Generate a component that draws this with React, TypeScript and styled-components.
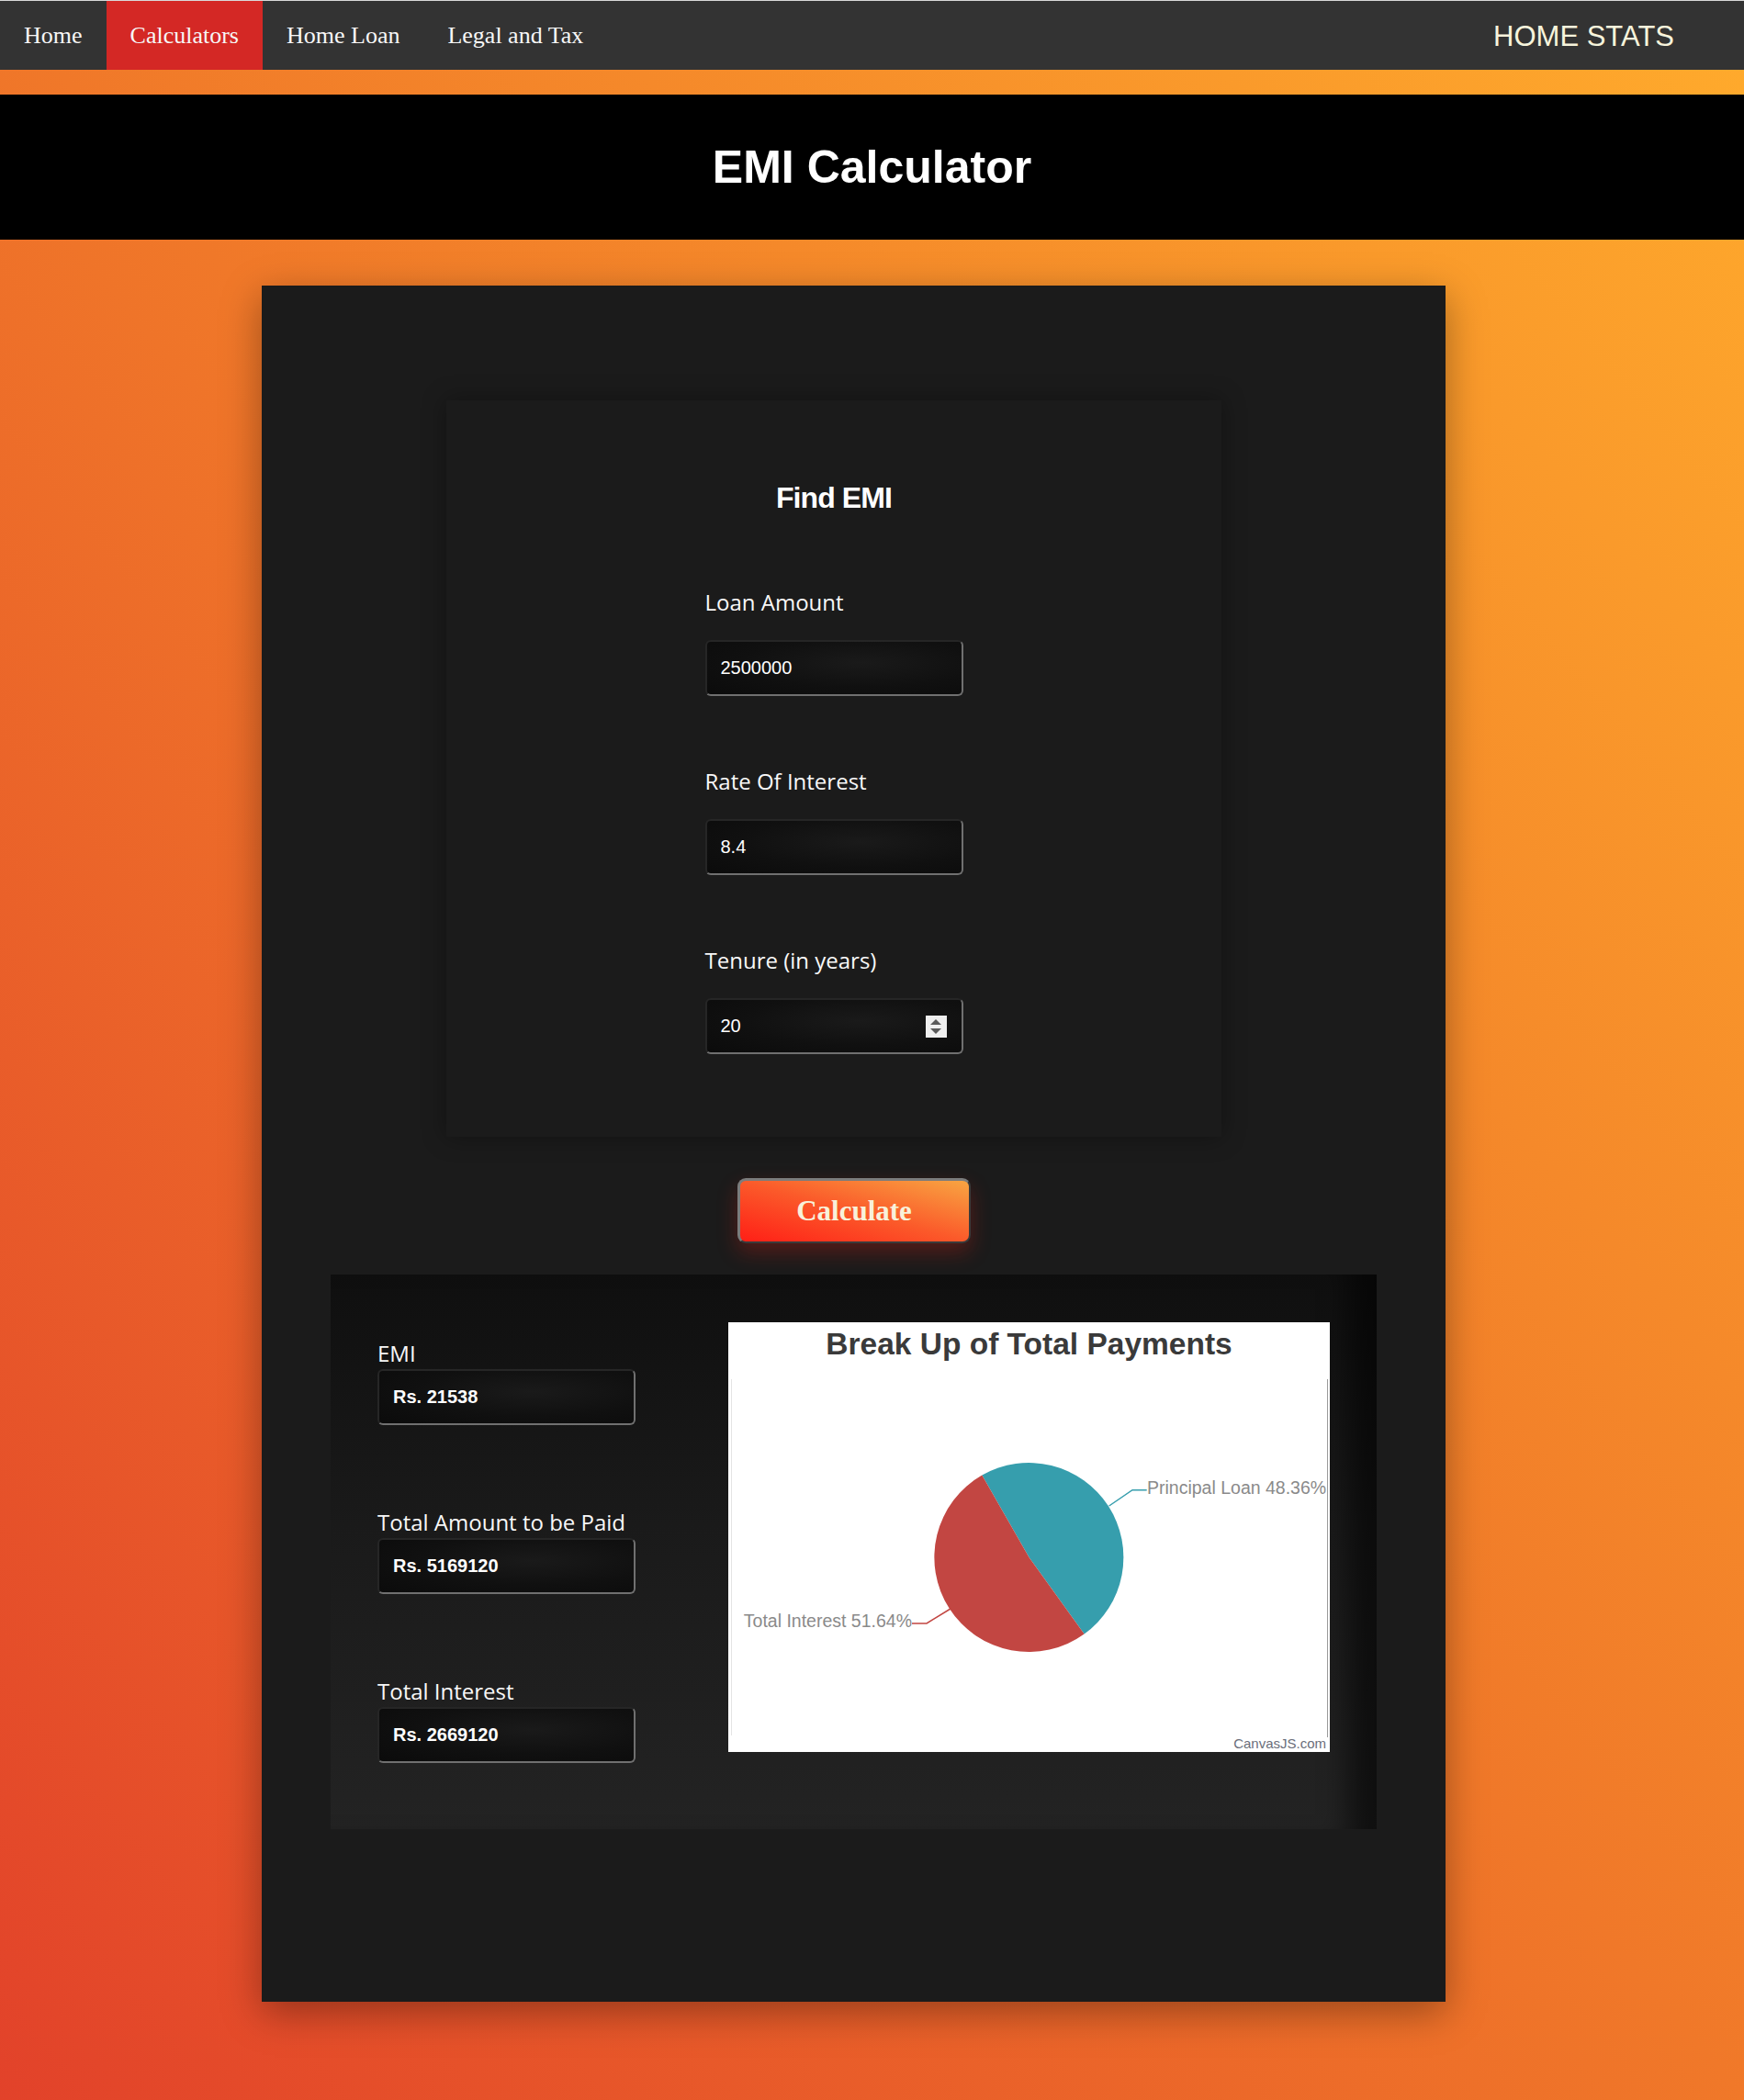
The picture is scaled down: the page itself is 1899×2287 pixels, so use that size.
import React from "react";
import styled, { createGlobalStyle } from "styled-components";

const GlobalStyle = createGlobalStyle`
  html, body { margin: 0; padding: 0; }
  body { font-family: "Liberation Sans", Arial, sans-serif; }
  * { box-sizing: border-box; }
`;

const Page = styled.div`
  min-height: 2287px;
  display: flow-root;
  background: linear-gradient(to top right, #e2422a 0%, #f07829 50%, #ffab2c 100%);
`;

const NavBar = styled.nav`
  height: 76px;
  border-top: 1px solid #d9d9d9;
  background: #333333;
  display: flex;
  justify-content: space-between;
  align-items: stretch;
`;

const NavList = styled.ul`
  display: flex;
  margin: 0;
  padding: 0;
  list-style: none;
`;

const NavItem = styled.li<{ $active?: boolean }>`
  display: flex;
  align-items: center;
  padding: 0 26px;
  font-family: "Liberation Serif", "Times New Roman", serif;
  font-size: 26px;
  color: #f7f7f7;
  background: ${(p) => (p.$active ? "#d42825" : "transparent")};
`;

const Brand = styled.div`
  display: flex;
  align-items: center;
  padding-top: 3px;
  margin-right: 76px;
  font-family: "Liberation Sans", Arial, sans-serif;
  font-size: 31px;
  color: #f7f4dc;
`;

const Header = styled.header`
  margin-top: 27px;
  height: 158px;
  background: #000;
  display: flex;
  align-items: center;
  justify-content: center;
`;

const Title = styled.h1`
  margin: 0;
  font-family: "Liberation Sans", Arial, sans-serif;
  font-weight: bold;
  font-size: 50px;
  color: #fff;
`;

const MainCard = styled.main`
  margin: 50px 0 107px 285px;
  width: 1289px;
  height: 1869px;
  background: #1b1b1b;
  box-shadow: 0 12px 40px rgba(0, 0, 0, 0.35);
  padding-top: 125px;
  display: flex;
  flex-direction: column;
`;

const FormCard = styled.section`
  margin-left: 201px;
  width: 844px;
  height: 802px;
  background: #1b1b1b;
  box-shadow: 0 0 24px rgba(0, 0, 0, 0.35);
  padding-top: 87px;
  display: flex;
  flex-direction: column;
  align-items: center;
`;

const CardTitle = styled.h2`
  margin: 0 0 80px;
  font-family: "Liberation Sans", Arial, sans-serif;
  font-weight: bold;
  font-size: 32px;
  line-height: 38px;
  letter-spacing: -0.9px;
  color: #fff;
`;

const FormColumn = styled.div`
  width: 281px;
  display: flex;
  flex-direction: column;
  gap: 78px;
`;

const ResultColumn = styled.div`
  padding-top: 19px;
  display: flex;
  flex-direction: column;
  gap: 91px;
`;

const Field = styled.div<{ $gap: number }>`
  display: flex;
  flex-direction: column;
  gap: ${(p) => p.$gap}px;
`;

const Label = styled.label`
  font-family: "Open Sans", Lato, sans-serif;
  font-weight: 400;
  font-size: 24px;
  line-height: 29px;
  color: #f8f8f8;
  white-space: nowrap;
`;

const FieldBox = styled.div`
  width: 281px;
  height: 61px;
  display: flex;
  align-items: center;
  padding: 0 16px 0 15px;
  border-radius: 6px;
  border-top: 2px solid #262626;
  border-left: 2px solid #262626;
  border-right: 2px solid #707070;
  border-bottom: 2px solid #707070;
  background: radial-gradient(ellipse at 60% 40%, #1a1a1a 0%, #101010 55%, #0b0b0b 100%);
`;

const FieldInput = styled.input<{ $bold?: boolean }>`
  flex: 1;
  min-width: 0;
  border: none;
  outline: none;
  background: transparent;
  padding: 0;
  font-family: "Liberation Sans", Arial, sans-serif;
  font-size: 20px;
  font-weight: ${(p) => (p.$bold ? "bold" : "normal")};
  color: #fff;
`;

const Spinner = styled.span`
  width: 23px;
  height: 24px;
  background: #efefef;
  display: flex;
  flex-direction: column;
  align-items: center;
  justify-content: center;
  gap: 4px;
`;

const Arrow = styled.span<{ $up?: boolean }>`
  width: 0;
  height: 0;
  border-left: 6px solid transparent;
  border-right: 6px solid transparent;
  ${(p) => (p.$up ? "border-bottom: 6px solid #5a5a5a;" : "border-top: 6px solid #5a5a5a;")}
`;

const CalcButton = styled.button`
  align-self: center;
  margin-top: 45px;
  width: 254px;
  height: 71px;
  border-radius: 9px;
  border-top: 3px solid #7c7c7c;
  border-left: 3px solid #7c7c7c;
  border-right: 2px solid #3a3a3a;
  border-bottom: 2px solid #3a3a3a;
  background: linear-gradient(to top right, #ff1f16 0%, #fb5a2a 50%, #f8a542 100%);
  box-shadow: 0 10px 22px rgba(255, 30, 20, 0.25);
  font-family: "Liberation Serif", "Times New Roman", serif;
  font-weight: bold;
  font-size: 31px;
  color: #f8f1da;
`;

const Results = styled.section`
  align-self: center;
  margin-top: 34px;
  width: 1139px;
  height: 604px;
  padding: 52px 51px 0 51px;
  display: flex;
  justify-content: space-between;
  align-items: flex-start;
  background: linear-gradient(to bottom, #0f0f0f 0%, #1a1a1a 45%, #232323 100%);
  box-shadow: inset -51px 0 30px -20px rgba(0, 0, 0, 0.55);
`;

const ChartBox = styled.div`
  width: 655px;
  height: 468px;
  background: #fff;
  flex: none;
`;

const chartFont = "Liberation Sans, Arial, sans-serif";

const PieChart = () => (
  <svg width="655" height="468" viewBox="0 0 655 468">
    <text x="327.5" y="35" textAnchor="middle" fontFamily={chartFont} fontWeight="bold" fontSize="33.5" fill="#3a3a3a">
      Break Up of Total Payments
    </text>
    <line x1="3.5" y1="62" x2="3.5" y2="450" stroke="#e4e4e4" />
    <line x1="652.5" y1="62" x2="652.5" y2="452" stroke="#9a9a9a" />
    <path d="M327.5 256 L276.3 166.6 A103 103 0 0 1 387.6 339.6 Z" fill="#369EAD" />
    <path d="M327.5 256 L387.6 339.6 A103 103 0 1 1 276.3 166.6 Z" fill="#C24642" />
    <polyline points="414.7,200 440,182.7 455.7,182.7" fill="none" stroke="#369EAD" strokeWidth="1.5" />
    <text x="456" y="187" fontFamily={chartFont} fontSize="19.5" fill="#8a8a8a">
      Principal Loan 48.36%
    </text>
    <polyline points="242,312 216,328 200,328" fill="none" stroke="#C24642" strokeWidth="1.5" />
    <text x="200" y="332" textAnchor="end" fontFamily={chartFont} fontSize="19.5" fill="#8a8a8a">
      Total Interest 51.64%
    </text>
    <text x="651" y="464" textAnchor="end" fontFamily={chartFont} fontSize="15" fill="#6a6e7a">
      CanvasJS.com
    </text>
  </svg>
);

const inputs = [
  { label: "Loan Amount", value: "2500000" },
  { label: "Rate Of Interest", value: "8.4" },
  { label: "Tenure (in years)", value: "20", spinner: true },
];

const results = [
  { label: "EMI", value: "Rs. 21538" },
  { label: "Total Amount to be Paid", value: "Rs. 5169120" },
  { label: "Total Interest", value: "Rs. 2669120" },
];

export default function App() {
  return (
    <Page>
      <GlobalStyle />
      <NavBar>
        <NavList>
          <NavItem>Home</NavItem>
          <NavItem $active>Calculators</NavItem>
          <NavItem>Home Loan</NavItem>
          <NavItem>Legal and Tax</NavItem>
        </NavList>
        <Brand>HOME STATS</Brand>
      </NavBar>
      <Header>
        <Title>EMI Calculator</Title>
      </Header>
      <MainCard>
        <FormCard>
          <CardTitle>Find EMI</CardTitle>
          <FormColumn>
            {inputs.map((f) => (
              <Field key={f.label} $gap={27}>
                <Label>{f.label}</Label>
                <FieldBox>
                  <FieldInput defaultValue={f.value} />
                  {f.spinner && (
                    <Spinner>
                      <Arrow $up />
                      <Arrow />
                    </Spinner>
                  )}
                </FieldBox>
              </Field>
            ))}
          </FormColumn>
        </FormCard>
        <CalcButton>Calculate</CalcButton>
        <Results>
          <ResultColumn>
            {results.map((r) => (
              <Field key={r.label} $gap={3}>
                <Label>{r.label}</Label>
                <FieldBox>
                  <FieldInput $bold readOnly value={r.value} />
                </FieldBox>
              </Field>
            ))}
          </ResultColumn>
          <ChartBox>
            <PieChart />
          </ChartBox>
        </Results>
      </MainCard>
    </Page>
  );
}
